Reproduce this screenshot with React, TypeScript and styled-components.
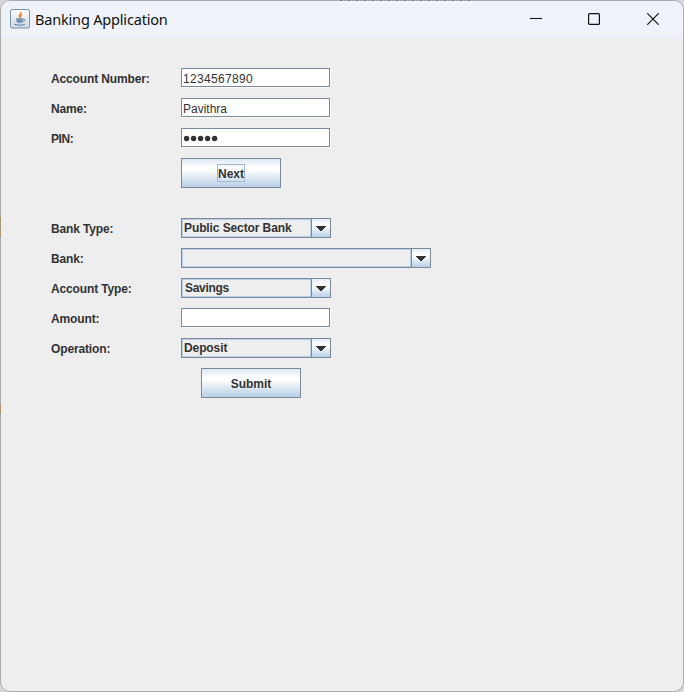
import React from "react";
import styled, { createGlobalStyle } from "styled-components";

const Global = createGlobalStyle`
  * { box-sizing: border-box; }
  html, body { margin: 0; height: 100%; overflow: hidden; background: #d6d6d8; }
`;

const Window = styled.div`
  width: 684px;
  height: 692px;
  display: flex;
  flex-direction: column;
  border: 1px solid #ababae;
  border-radius: 10px;
  background: #eeeeee;
  overflow: hidden;
  color: #333333;
  font: bold 12px/20px "Liberation Sans", Arial, sans-serif;
`;

const EdgeShow = styled.div`
  position: absolute;
  top: 0;
  left: 340px;
  width: 131px;
  height: 1px;
  background: repeating-linear-gradient(90deg, #707074 0 2px, #b0b0b3 2px 5px, #85858a 5px 6px, #b0b0b3 6px 8px);
`;

const EdgeMark = styled.div<{ $top: number; $height: number }>`
  position: absolute;
  left: 0;
  top: ${(p) => p.$top}px;
  width: 1px;
  height: ${(p) => p.$height}px;
  background: repeating-linear-gradient(#b09a63 0 3px, #9c9582 3px 5px);
`;

const TitleBar = styled.header`
  height: 37px;
  flex: none;
  display: flex;
  align-items: center;
  padding: 0 0 2px 9px;
  background: #eff3f9;
`;

const Title = styled.h1`
  flex: 1;
  margin: 0 0 0 5px;
  padding-top: 2px;
  color: #111;
  font: 400 14.5px/33px "Segoe UI", "Noto Sans", sans-serif;
  letter-spacing: -0.18px;
  white-space: nowrap;
`;

const Controls = styled.div`
  display: flex;
  gap: 46px;
  padding-right: 24px;
`;

const Glyph = styled.svg<{ $after?: number }>`
  display: block;
  flex: none;
  margin-right: ${(p) => p.$after ?? 0}px;
`;

const Form = styled.form`
  display: flex;
  flex-direction: column;
  gap: 10px;
  padding: 30px 0 0 50px;
`;

const Row = styled.div`
  display: grid;
  grid-template-columns: 130px max-content;
  height: 20px;
`;

const ButtonRow = styled.div<{ $indent: number; $after?: number }>`
  padding-left: ${(p) => p.$indent}px;
  margin-bottom: ${(p) => p.$after ?? 0}px;
  display: flex;
`;

const Label = styled.label<{ $spacing?: number }>`
  white-space: nowrap;
  padding-top: 1px;
  letter-spacing: ${(p) => p.$spacing ?? -0.14}px;
`;

const Field = styled.div<{ $spacing?: number }>`
  width: 149px;
  height: 19px;
  border: 1px solid #7a8a99;
  background: #fff;
  box-shadow: 1px 1px 0 #fafafa;
  padding: 1px 0 0 1px;
  font-weight: 400;
  line-height: 18px;
  letter-spacing: ${(p) => p.$spacing ?? 0}px;
  display: flex;
`;

const Combo = styled.div<{ $width: number }>`
  display: flex;
  width: ${(p) => p.$width}px;
  height: 20px;
  border: 1px solid #7a8a99;
`;

const ComboValue = styled.span<{ $inset?: number; $spacing?: number }>`
  flex: 1;
  border: 1px solid #b8cfe5;
  padding-left: ${(p) => p.$inset ?? 1}px;
  line-height: 17px;
  letter-spacing: ${(p) => p.$spacing ?? -0.1}px;
`;

const ComboArrow = styled.span`
  width: 19px;
  border-left: 1px solid #7a8a99;
  background: linear-gradient(#e3edf7, #fff 32%, #f7fafd 45%, #b8cfe5);
  display: flex;
  justify-content: center;
  padding-top: 7px;
`;

const Button = styled.button`
  width: 100px;
  height: 30px;
  padding: 0;
  border: 1px solid #7a8a99;
  border-radius: 0;
  background: linear-gradient(#dde8f3, #fff 32%, #fff 38%, #b8cfe5);
  color: #333;
  font: inherit;
  display: flex;
  align-items: center;
  justify-content: center;
`;

const ButtonText = styled.span<{ $focused?: boolean; $spacing?: number }>`
  border: 1px solid ${(p) => (p.$focused ? "#a3b8cc" : "transparent")};
  height: 18px;
  line-height: 18px;
  letter-spacing: ${(p) => p.$spacing ?? 0}px;
`;

const JavaIcon = () => (
  <Glyph width="20" height="20" viewBox="0 0 20 20" fill="none">
    <defs>
      <linearGradient id="tile" x1="0" y1="0" x2="0" y2="1">
        <stop stopColor="#fdfdfe" />
        <stop offset="1" stopColor="#cfd9e3" />
      </linearGradient>
    </defs>
    <rect x="0.5" y="0.5" width="19" height="18.5" rx="1.5" fill="url(#tile)" stroke="#7890aa" />
    <path d="M10.6 2.8c1.6 2-3 3.1-1.2 5.1l.9 1.3M12.3 5.2c-2.4 1-1.6 1.9-1.3 3.3" stroke="#e58b42" strokeWidth="1.4" />
    <path d="M6 9.8h7c0 2-.6 3.8-1.6 4.4H7.8C6.6 13.6 6 11.8 6 9.8z" fill="#86a6c0" />
    <path d="M6 10h7M6.8 12.2h5.6M13 10.4c2.8-.4 2.4 2-.4 2.3M4.4 15.2c3 1.3 7.6 1.3 10.6 0" stroke="#547fa3" />
  </Glyph>
);

const Arrow = () => (
  <Glyph width="10" height="5" viewBox="0 0 10 5" shapeRendering="crispEdges">
    <path d="M0 0h10v1H9v1H8v1H7v1H6v1H4V4H3V3H2V2H1V1H0z" fill="#333" />
  </Glyph>
);

const Dots = () => (
  <Glyph width="36" height="16" viewBox="0 0 36 16" fill="#333">
    {[0, 1, 2, 3, 4].map((i) => (
      <circle key={i} cx={3.6 + i * 7} cy="8.5" r="2.7" />
    ))}
  </Glyph>
);

type SelectProps = { width?: number; value?: string; inset?: number; spacing?: number };
const Select = ({ width = 150, value, inset, spacing }: SelectProps) => (
  <Combo $width={width}>
    <ComboValue $inset={inset} $spacing={spacing}>{value}</ComboValue>
    <ComboArrow><Arrow /></ComboArrow>
  </Combo>
);

export default function App() {
  return (
    <>
      <Global />
      <Window>
        <TitleBar>
          <JavaIcon />
          <Title>Banking Application</Title>
          <Controls>
            <Glyph width="12" height="12" viewBox="0 0 12 12" stroke="#111"><path d="M0 5.5h12" /></Glyph>
            <Glyph $after={1} width="12" height="12" viewBox="0 0 12 12" fill="none" stroke="#111" strokeWidth="1.2">
              <rect x="0.6" y="0.6" width="10.8" height="10.8" rx="1" />
            </Glyph>
            <Glyph width="12" height="12" viewBox="0 0 12 12" stroke="#111" strokeWidth="1.2">
              <path d="M.3.3l11.4 11.4M11.7.3L.3 11.7" />
            </Glyph>
          </Controls>
        </TitleBar>
        <Form>
          <Row><Label>Account Number:</Label><Field $spacing={0.33}>1234567890</Field></Row>
          <Row><Label>Name:</Label><Field>Pavithra</Field></Row>
          <Row><Label $spacing={-0.4}>PIN:</Label><Field><Dots /></Field></Row>
          <ButtonRow $indent={130} $after={20}>
            <Button type="button"><ButtonText $focused>Next</ButtonText></Button>
          </ButtonRow>
          <Row><Label>Bank Type:</Label><Select value="Public Sector Bank" /></Row>
          <Row><Label>Bank:</Label><Select width={250} /></Row>
          <Row><Label>Account Type:</Label><Select value="Savings" inset={2} spacing={-0.3} /></Row>
          <Row><Label>Amount:</Label><Field /></Row>
          <Row><Label>Operation:</Label><Select value="Deposit" /></Row>
          <ButtonRow $indent={150}>
            <Button type="button"><ButtonText>Submit</ButtonText></Button>
          </ButtonRow>
        </Form>
      </Window>
      <EdgeShow />
      <EdgeMark $top={217} $height={20} />
      <EdgeMark $top={404} $height={10} />
    </>
  );
}
